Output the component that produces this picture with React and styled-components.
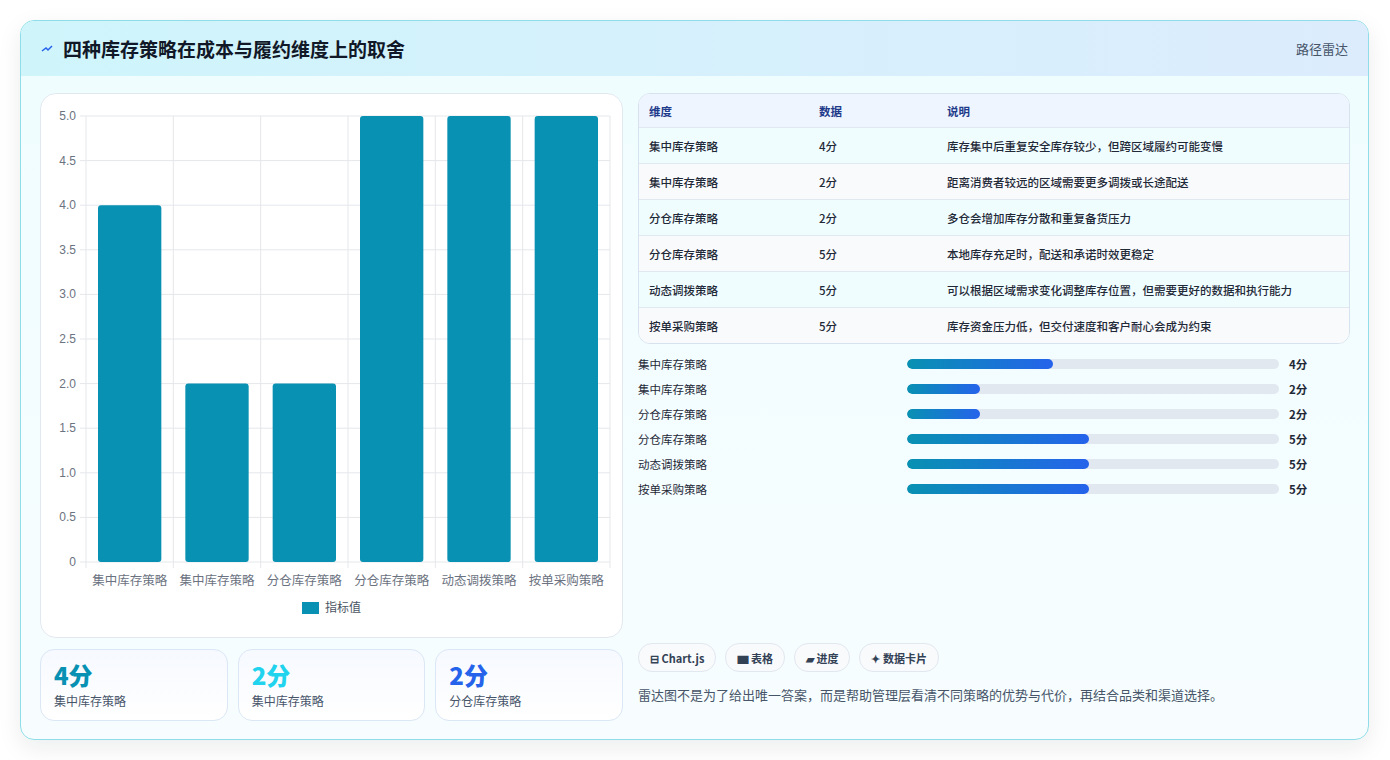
import React from "react";
import styled, { createGlobalStyle } from "styled-components";

const Global = createGlobalStyle`
  body { margin: 0; background: #ffffff; font-family: "Noto Sans CJK SC", "Noto Sans", sans-serif; }
`;

const rows = [
  { name: "集中库存策略", v: 4, note: "库存集中后重复安全库存较少，但跨区域履约可能变慢" },
  { name: "集中库存策略", v: 2, note: "距离消费者较远的区域需要更多调拨或长途配送" },
  { name: "分仓库存策略", v: 2, note: "多仓会增加库存分散和重复备货压力" },
  { name: "分仓库存策略", v: 5, note: "本地库存充足时，配送和承诺时效更稳定" },
  { name: "动态调拨策略", v: 5, note: "可以根据区域需求变化调整库存位置，但需要更好的数据和执行能力" },
  { name: "按单采购策略", v: 5, note: "库存资金压力低，但交付速度和客户耐心会成为约束" },
];

const Page = styled.div`
  padding: 20px 21px 20px 20px;
`;
const Card = styled.div`
  border: 1px solid #8fdde8;
  border-radius: 14px;
  overflow: hidden;
  background: linear-gradient(180deg, #effdff 0%, #f7fdff 100%);
  box-shadow: 0 8px 24px rgba(15, 23, 42, 0.08);
  height: 718px;
`;
const Header = styled.div`
  height: 55px;
  display: flex;
  align-items: center;
  justify-content: space-between;
  padding: 0 20px;
  background: linear-gradient(90deg, #cff5fb 0%, #dcecfd 100%);
`;
const Title = styled.h1`
  margin: 0;
  font-size: 19px;
  font-weight: 700;
  color: #111827;
  display: flex;
  align-items: center;
  gap: 10px;
`;
const Tag = styled.span`
  font-size: 13px;
  color: #475569;
`;
const Body = styled.div`
  display: grid;
  grid-template-columns: 583px 1fr;
  gap: 15px;
  padding: 17px 18px 0 19px;
`;
const Col = styled.div`
  display: flex;
  flex-direction: column;
`;
const ChartBox = styled.div`
  height: 543px;
  background: #fff;
  border: 1px solid #e2e8f0;
  border-radius: 16px;
`;
const Stats = styled.div`
  display: grid;
  grid-template-columns: repeat(3, 1fr);
  gap: 10px;
  margin-top: 11px;
`;
const Stat = styled.div`
  height: 72px;
  border: 1px solid #dbe7f5;
  border-radius: 14px;
  background: linear-gradient(180deg, #f6f9ff, #ffffff);
  padding: 10px 13px;
  box-sizing: border-box;
`;
const StatValue = styled.div`
  font-size: 24px;
  font-weight: 800;
  line-height: 30px;
  color: ${(p) => p.$c};
`;
const StatLabel = styled.div`
  font-size: 12px;
  color: #475569;
  margin-top: 2px;
`;
const Table = styled.div`
  border: 1px solid #d6e2ee;
  border-radius: 12px;
  overflow: hidden;
  background: #fff;
`;
const Row = styled.div`
  display: grid;
  grid-template-columns: 170px 128px 1fr;
  height: ${(p) => (p.$head ? 33 : 35)}px;
  align-items: center;
  padding: 0 10px;
  font-size: 11.5px;
  color: ${(p) => (p.$head ? "#1e3a8a" : "#1f2937")};
  background: ${(p) => (p.$head ? "#eef5ff" : p.$odd ? "#f0fdff" : "#f8fafc")};
  border-top: ${(p) => (p.$head ? "none" : "1px solid #e2e8f0")};
  font-weight: ${(p) => (p.$head ? 600 : 500)};
`;
const Bars = styled.div`
  display: flex;
  flex-direction: column;
  gap: 9px;
  margin-top: 12px;
`;
const BarRow = styled.div`
  display: grid;
  grid-template-columns: 269px 372px 1fr;
  gap: 0;
  align-items: center;
  height: 16px;
  font-size: 11.5px;
  color: #1f2937;
`;
const Track = styled.div`
  height: 10px;
  border-radius: 5px;
  background: #e2e8f0;
  overflow: hidden;
`;
const Fill = styled.div`
  height: 100%;
  border-radius: 5px;
  background: linear-gradient(90deg, #0891b2, #2563eb);
`;
const Score = styled.span`
  font-weight: 700;
  padding-left: 10px;
`;
const Chips = styled.div`
  display: flex;
  gap: 9px;
  margin-top: auto;
`;
const Chip = styled.span`
  height: 27px;
  padding: 0 11px;
  display: inline-flex;
  align-items: center;
  gap: 4px;
  border: 1px solid #e2e8f0;
  border-radius: 14px;
  background: #f8fafc;
  font-size: 11px;
  font-weight: 600;
  color: #334155;
`;
const Note = styled.p`
  margin: 13px 0 17px;
  font-size: 13px;
  color: #475569;
`;

function Chart() {
  const left = 45, top = 22, w = 524, h = 446;
  const n = 6, cw = w / n;
  const ticks = [0, 0.5, 1, 1.5, 2, 2.5, 3, 3.5, 4, 4.5, 5];
  return (
    <svg width="583" height="543" fontFamily="Liberation Sans, Noto Sans CJK SC, sans-serif">
      {ticks.map((t) => {
        const y = top + h - (t / 5) * h;
        return (
          <g key={t}>
            <line x1={left - 6} x2={left + w} y1={y} y2={y} stroke="#e5e7eb" />
            <text x={left - 10} y={y + 4} fontSize="12" fill="#6b7280" textAnchor="end">
              {t === 0 ? "0" : t.toFixed(1)}
            </text>
          </g>
        );
      })}
      {Array.from({ length: n + 1 }).map((_, i) => (
        <line key={i} x1={left + i * cw} x2={left + i * cw} y1={top} y2={top + h + 6} stroke="#e5e7eb" />
      ))}
      {rows.map((r, i) => {
        const bh = (r.v / 5) * h;
        return (
          <g key={i}>
            <rect x={left + i * cw + 12} y={top + h - bh} width={cw - 24} height={bh} rx="3" fill="#0891b2" />
            <text x={left + i * cw + cw / 2} y={top + h + 23} fontSize="12.5" fill="#6b7280" textAnchor="middle">
              {r.name}
            </text>
          </g>
        );
      })}
      <rect x="261" y="508" width="17" height="12" fill="#0891b2" />
      <text x="284" y="518" fontSize="12" fill="#4b5563">指标值</text>
    </svg>
  );
}

const stats = [
  { v: "4分", l: "集中库存策略", c: "#0891b2" },
  { v: "2分", l: "集中库存策略", c: "#22d3ee" },
  { v: "2分", l: "分仓库存策略", c: "#2563eb" },
];

export default function App() {
  return (
    <Page>
      <Global />
      <Card>
        <Header>
          <Title>
            <svg width="12" height="8" viewBox="0 0 12 8">
              <path d="M1 6 L5 3 L7 5 L11 1" stroke="#2563eb" strokeWidth="1.5" fill="none" />
            </svg>
            四种库存策略在成本与履约维度上的取舍
          </Title>
          <Tag>路径雷达</Tag>
        </Header>
        <Body>
          <Col>
            <ChartBox>
              <Chart />
            </ChartBox>
            <Stats>
              {stats.map((s, i) => (
                <Stat key={i}>
                  <StatValue $c={s.c}>{s.v}</StatValue>
                  <StatLabel>{s.l}</StatLabel>
                </Stat>
              ))}
            </Stats>
          </Col>
          <Col>
            <Table>
              <Row $head>
                <span>维度</span>
                <span>数据</span>
                <span>说明</span>
              </Row>
              {rows.map((r, i) => (
                <Row key={i} $odd={i % 2 === 0}>
                  <span>{r.name}</span>
                  <span>{r.v}分</span>
                  <span>{r.note}</span>
                </Row>
              ))}
            </Table>
            <Bars>
              {rows.map((r, i) => (
                <BarRow key={i}>
                  <span>{r.name}</span>
                  <Track>
                    <Fill style={{ width: `${r.v * 9.8}%` }} />
                  </Track>
                  <Score>{r.v}分</Score>
                </BarRow>
              ))}
            </Bars>
            <Chips>
              <Chip>⊟ Chart.js</Chip>
              <Chip>▆ 表格</Chip>
              <Chip>▰ 进度</Chip>
              <Chip>✦ 数据卡片</Chip>
            </Chips>
            <Note>雷达图不是为了给出唯一答案，而是帮助管理层看清不同策略的优势与代价，再结合品类和渠道选择。</Note>
          </Col>
        </Body>
      </Card>
    </Page>
  );
}
